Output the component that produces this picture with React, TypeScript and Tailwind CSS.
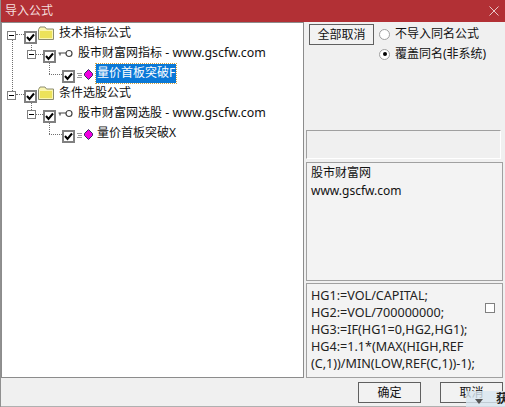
import React from 'react';

const FONT = "font-['Noto_Sans','Noto_Sans_CJK_SC',sans-serif]";

const Check = ({ className = '' }: { className?: string }) => (
    <div className={`w-[13px] h-[13px] border-[2px] border-[#808080] bg-white flex items-center justify-center shrink-0 ${className}`}>
        <svg width="9" height="9" viewBox="0 0 9 9">
            <path d="M1 4 L3.5 7 L8 1.5" fill="none" stroke="#000" strokeWidth="2" />
        </svg>
    </div>
);

const Expander = ({ className = '' }: { className?: string }) => (
    <div className={`w-[9px] h-[9px] border border-[#808080] bg-white flex items-center justify-center shrink-0 ${className}`}>
        <div className="w-[5px] h-px bg-black" />
    </div>
);

const Folder = () => (
    <svg width="16" height="14" viewBox="0 0 16 14" className="shrink-0 mt-[3px]">
        <path d="M0.5 3.5 L2 1 H7 L8.5 3 H15.5 V13.5 H0.5 Z" fill="#fbf6b0" stroke="#8c8c70" strokeWidth="1" />
        <path d="M2 5 H14 V12 H2 Z" fill="#ece25a" />
    </svg>
);

const KeyIcon = () => (
    <svg width="15" height="9" viewBox="0 0 15 9" className="shrink-0 mt-[6px]">
        <circle cx="11" cy="4.5" r="3" fill="#fff" stroke="#444" strokeWidth="1.2" />
        <path d="M0.5 4 H8 M2 4 V6.5" stroke="#444" strokeWidth="1.2" fill="none" />
    </svg>
);

const Gem = () => (
    <svg width="16" height="11" viewBox="0 0 16 11" className="shrink-0 mt-[6px]">
        <path d="M0 4.5 H5 M1 6.5 H5 M0 8.5 H5" stroke="#999" strokeWidth="1" />
        <path d="M11.5 0.5 L15.5 4.5 V6.5 L11.5 10.5 L7.5 6.5 V4.5 Z" fill="#f000e0" stroke="#303060" strokeWidth="1" />
    </svg>
);

const Dots = ({ className }: { className: string }) => (
    <div className={`absolute border-dotted border-[#707070] ${className}`} />
);

const TreeGroup = ({
    title,
    sub,
    leaf,
    selected,
    checkTop,
}: {
    title: string;
    sub: string;
    leaf: string;
    selected?: boolean;
    checkTop: string;
}) => (
    <div className="flex flex-col relative">
        <Dots className="left-[14px] top-[11px] w-[8px] border-t" />
        <Dots className="left-[29px] top-[20px] h-[7px] border-l" />
        <Dots className="left-[33px] top-[31px] w-[8px] border-t" />
        <Dots className="left-[47px] top-[40px] h-[11px] border-l" />
        <Dots className="left-[47px] top-[51px] w-[13px] border-t" />
        <div className="h-[20px] flex items-start pl-[5px] relative">
            <Expander className="mt-[8px]" />
            <Check className={`ml-[8px] ${checkTop}`} />
            <div className="ml-px">
                <Folder />
            </div>
            <span className="ml-[5px] mt-px whitespace-nowrap">{title}</span>
        </div>
        <div className="h-[20px] flex items-start pl-[25px] relative">
            <Expander className="mt-[7px]" />
            <Check className="ml-[7px] mt-[7px]" />
            <div className="ml-[2px]">
                <KeyIcon />
            </div>
            <span className="ml-[5px] mt-px whitespace-nowrap">
                {sub}
                <span className="text-[12.4px]"> - www.gscfw.com</span>
            </span>
        </div>
        <div className="h-[20px] flex items-start pl-[60px] relative">
            <Check className="mt-[7px]" />
            <div className="ml-[2px]">
                <Gem />
            </div>
            <span
                className={`ml-[3px] mt-px h-[19px] whitespace-nowrap px-px ${
                    selected ? 'bg-[#0a78d7] text-white outline-1 outline-dotted outline-[#d0a040]' : ''
                }`}
            >
                {leaf}
            </span>
        </div>
    </div>
);

export default function App() {
    return (
        <div className={`w-[505px] h-[407px] bg-[#f0f0f0] flex flex-col relative overflow-hidden text-[12px] leading-[18px] text-[#111] border-l border-[#909090] ${FONT}`}>
            <div className="h-[22px] bg-[#b23035] flex items-center justify-between pl-[4px] pr-[6px] text-[#f4dede] shrink-0 -ml-px">
                <span className="pl-px">导入公式</span>
                <svg width="10" height="10" viewBox="0 0 10 10">
                    <path d="M0.5 0.5 L9.5 9.5 M9.5 0.5 L0.5 9.5" stroke="#e8c8c8" strokeWidth="1" />
                </svg>
            </div>

            <div className="flex h-[356px] shrink-0">
                <div className="w-[303px] bg-white border border-l-[1px] border-[#8c8c8c] relative">
                    <Dots className="left-[10px] top-[15px] h-[53px] border-l" />
                    <TreeGroup title="技术指标公式" sub="股市财富网指标" leaf="量价首板突破F" selected checkTop="mt-[8px]" />
                    <TreeGroup title="条件选股公式" sub="股市财富网选股" leaf="量价首板突破X" checkTop="mt-[7px]" />
                </div>

                <div className="flex-1 flex flex-col pl-[2px] pr-[2px]">
                    <div className="h-[108px] flex items-start pt-[2px] shrink-0">
                        <button className="w-[65px] h-[21px] ml-[3px] border border-[#606060] bg-[#f2f2f2] flex items-center justify-center">
                            全部取消
                        </button>
                        <div className="ml-[5px] flex flex-col gap-[2px] mt-px">
                            <label className="h-[18px] flex items-center gap-[5px]">
                                <div className="w-[11px] h-[11px] rounded-full border border-[#a0a0a0] bg-white" />
                                <span>不导入同名公式</span>
                            </label>
                            <label className="h-[18px] flex items-center gap-[5px]">
                                <div className="w-[11px] h-[11px] rounded-full border border-[#a0a0a0] bg-white flex items-center justify-center">
                                    <div className="w-[4px] h-[4px] rounded-full bg-black" />
                                </div>
                                <span>覆盖同名(非系统)</span>
                            </label>
                        </div>
                    </div>
                    <div className="h-[29px] w-[195px] shrink-0 border border-[#a0a0a0] border-b-white border-r-white" />
                    <div className="h-[119px] mt-[3px] shrink-0 border border-[#a0a0a0] bg-[#f3f3f3] px-[4px] pt-px">
                        <div>股市财富网</div>
                        <div>www.gscfw.com</div>
                    </div>
                    <div className="h-[95px] mt-[2px] shrink-0 border border-[#a0a0a0] bg-[#f3f3f3] pl-[4px] pt-[3px] flex text-[12.6px] leading-[17px] text-[#222]">
                        <div className="w-[174px] shrink-0">
                            <div className="whitespace-nowrap">HG1:=VOL/CAPITAL;</div>
                            <div className="whitespace-nowrap">HG2:=VOL/700000000;</div>
                            <div className="whitespace-nowrap">HG3:=IF(HG1=0,HG2,HG1);</div>
                            <div className="whitespace-nowrap">HG4:=1.1*(MAX(HIGH,REF</div>
                            <div className="whitespace-nowrap">(C,1))/MIN(LOW,REF(C,1))-1);</div>
                        </div>
                        <div className="w-[10px] h-[10px] border border-[#808080] bg-white mt-[16px]" />
                    </div>
                </div>
            </div>

            <div className="flex-1 flex items-start justify-end gap-[19px] pr-[2px] pt-[4px] border-b border-[#b0b0b0]">
                <button className="w-[63px] h-[21px] border border-[#606060] bg-[#f2f2f2] flex items-center justify-center">确定</button>
                <button className="w-[63px] h-[21px] border border-[#606060] bg-[#f2f2f2] flex items-center justify-center">取消</button>
            </div>

            <div className="absolute left-[465px] top-[391px] w-[40px] h-[16px] bg-[#d8e6f0]/80 flex items-center pl-[9px] text-[#222]">
                <svg width="8" height="5" viewBox="0 0 8 5" className="shrink-0 mt-[5px]">
                    <path d="M0 0 H8 L4 5 Z" fill="#555" />
                </svg>
                <span className="ml-[13px] font-bold whitespace-nowrap">获</span>
            </div>
        </div>
    );
}
